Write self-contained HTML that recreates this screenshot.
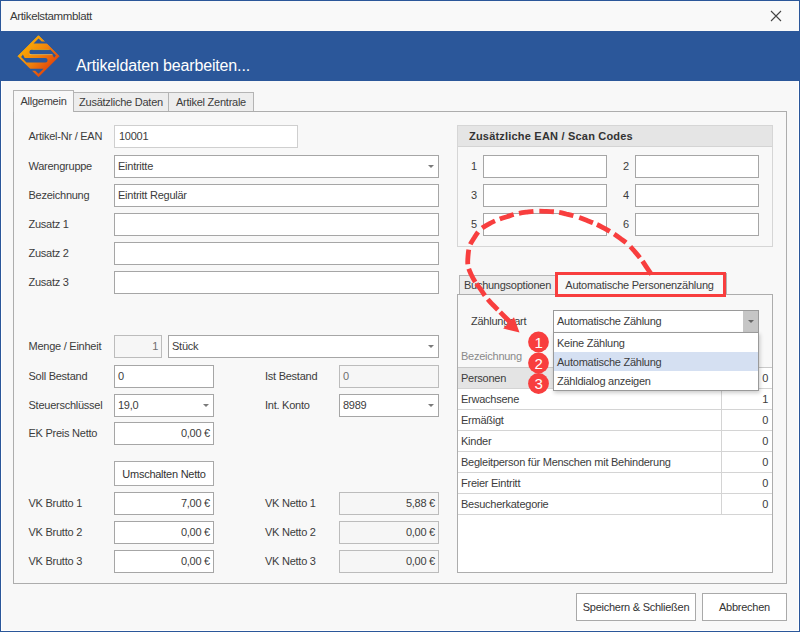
<!DOCTYPE html>
<html lang="de">
<head>
<meta charset="utf-8">
<title>Artikelstammblatt</title>
<style>
*{box-sizing:border-box;margin:0;padding:0}
html,body{width:800px;height:632px;overflow:hidden;background:#f8f8f8}
body{font-family:"Liberation Sans",sans-serif;font-size:11px;color:#3c3c3c;position:relative;letter-spacing:-0.25px}
.abs{position:absolute}
#win{position:absolute;left:0;top:0;width:800px;height:632px;border:1px solid #2b579a;background:#f8f8f8;overflow:hidden}
#inner{position:absolute;left:0;top:0;width:798px;height:630px;border:1px solid #fff}
#titlebar{position:absolute;left:0;top:0;width:798px;height:30px;background:#f9f9f9}
#titlebar span{position:absolute;left:9px;top:3px;font-size:11.5px;line-height:24px;color:#3a3a3a;letter-spacing:-0.37px}
#header{position:absolute;left:0;top:30px;width:798px;height:50px;background:#2b579a}
#header .t{position:absolute;left:75px;top:23px;font-size:16px;line-height:24px;color:#fff;white-space:nowrap;letter-spacing:-0.15px}
.lbl{position:absolute;white-space:nowrap;line-height:22px;height:22px;font-size:11px;color:#3c3c3c}
.fld{position:absolute;height:23px;background:#fff;border:1px solid #a6a6a6;line-height:20px;padding:0 3px;white-space:nowrap;font-size:11px;color:#3c3c3c}
.fld.r{text-align:right;padding-right:3px}
.fld.dis{background:#f6f6f6;border-color:#bcbcbc;color:#6e6e6e}
.fld.lt{border-color:#cfcfcf}
.dd:after{content:"";position:absolute;right:4px;top:9px;border-left:3px solid transparent;border-right:3px solid transparent;border-top:3px solid #7a7a7a}
.tab{position:absolute;border:1px solid #b4b4b4;border-bottom:none;background:#ededed;font-size:11px;text-align:center;white-space:nowrap;color:#3c3c3c}
.tab.sel{background:#f8f8f8;z-index:3}
.panel{position:absolute;border:1px solid #adadad;background:#f8f8f8}
.btn{position:absolute;background:#fff;border:1px solid #a9a9a9;text-align:center;font-size:11px;white-space:nowrap;color:#333}
</style>
</head>
<body>
<div id="win">
<div id="inner"></div>
<div id="titlebar"><span>Artikelstammblatt</span>
<svg class="abs" style="left:769px;top:9px" width="12" height="12" viewBox="0 0 12 12"><path d="M1 1 L11 11 M11 1 L1 11" stroke="#444" stroke-width="1.1" fill="none"/></svg>
</div>
<div id="header">
<svg class="abs" style="left:14px;top:2px" width="46" height="46" viewBox="-23 -23 46 46">
<defs>
<linearGradient id="lg" x1="0.1" y1="0.1" x2="0.9" y2="0.9">
<stop offset="0" stop-color="#fdb900"/>
<stop offset="0.5" stop-color="#f0820c"/>
<stop offset="1" stop-color="#dc300c"/>
</linearGradient>
</defs>
<g transform="translate(0.5,0.2)">
<path d="M0 -20.5 L20.5 0 L0 20.5 L-20.5 0 Z" fill="url(#lg)" stroke="url(#lg)" stroke-width="1" stroke-linejoin="round"/>
<g fill="#2b579a">
<path id="n1" d="M0 -17.6 L-5 -12.6 L12 -12.6 L12 -14.6 L3.2 -14.6 Z"/>
<path id="h1" d="M-6.8 -6.4 L12 -6.4 L17.4 -0.8 L15.6 1.6 L13.8 -1.8 L-6.8 -1.8 A2.3 2.3 0 0 1 -6.8 -6.4 Z"/>
<use href="#n1" transform="rotate(180)"/>
<use href="#h1" transform="rotate(180)"/>
</g>
<path d="M-9 -1.6 L14 -1.6" stroke="#ffd35a" stroke-width="0.8" opacity="0.7"/>
<path d="M-6 -6.6 L11 -6.6" stroke="#ffd000" stroke-width="0.6" opacity="0.6"/>
</g>
</svg>
<div class="t">Artikeldaten bearbeiten...</div>
</div>

<!-- main tabs -->
<div class="tab sel" style="left:12px;top:89px;width:61px;height:22px;line-height:21px">Allgemein</div>
<div class="tab" style="left:72px;top:91px;width:96px;height:19px;line-height:18px">Zusätzliche Daten</div>
<div class="tab" style="left:167px;top:91px;width:86px;height:19px;line-height:18px">Artikel Zentrale</div>
<div class="panel" style="left:12px;top:110px;width:774px;height:473px"></div>

<!-- left column -->
<div class="lbl" style="left:27.5px;top:124px">Artikel-Nr / EAN</div>
<div class="fld lt" style="left:113px;top:124px;width:184px;padding-left:4px">10001</div>
<div class="lbl" style="left:27.5px;top:154px">Warengruppe</div>
<div class="fld dd" style="left:113px;top:154px;width:325px">Eintritte</div>
<div class="lbl" style="left:27.5px;top:183px">Bezeichnung</div>
<div class="fld" style="left:113px;top:183px;width:325px">Eintritt Regulär</div>
<div class="lbl" style="left:27.5px;top:212px">Zusatz 1</div>
<div class="fld" style="left:113px;top:212px;width:325px"></div>
<div class="lbl" style="left:27.5px;top:241px">Zusatz 2</div>
<div class="fld" style="left:113px;top:241px;width:325px"></div>
<div class="lbl" style="left:27.5px;top:270px">Zusatz 3</div>
<div class="fld" style="left:113px;top:270px;width:325px"></div>

<div class="lbl" style="left:27.5px;top:334px">Menge / Einheit</div>
<div class="fld r dis" style="left:113px;top:334px;width:48px">1</div>
<div class="fld dd" style="left:167px;top:334px;width:271px">Stück</div>
<div class="lbl" style="left:27.5px;top:364px">Soll Bestand</div>
<div class="fld" style="left:113px;top:364px;width:100px">0</div>
<div class="lbl" style="left:264px;top:364px">Ist Bestand</div>
<div class="fld dis" style="left:338px;top:364px;width:100px">0</div>
<div class="lbl" style="left:27.5px;top:393px">Steuerschlüssel</div>
<div class="fld dd" style="left:113px;top:393px;width:100px">19,0</div>
<div class="lbl" style="left:264px;top:393px">Int. Konto</div>
<div class="fld dd" style="left:338px;top:393px;width:100px">8989</div>
<div class="lbl" style="left:27.5px;top:421px">EK Preis Netto</div>
<div class="fld r" style="left:113px;top:421px;width:100px">0,00 €</div>

<div class="btn" style="left:113px;top:460px;width:100px;height:25px;line-height:24px">Umschalten Netto</div>

<div class="lbl" style="left:27.5px;top:491px">VK Brutto 1</div>
<div class="fld r" style="left:113px;top:491px;width:100px">7,00 €</div>
<div class="lbl" style="left:264px;top:491px">VK Netto 1</div>
<div class="fld r dis" style="left:338px;top:491px;width:100px;color:#3c3c3c">5,88 €</div>
<div class="lbl" style="left:27.5px;top:520px">VK Brutto 2</div>
<div class="fld r" style="left:113px;top:520px;width:100px">0,00 €</div>
<div class="lbl" style="left:264px;top:520px">VK Netto 2</div>
<div class="fld r dis" style="left:338px;top:520px;width:100px;color:#3c3c3c">0,00 €</div>
<div class="lbl" style="left:27.5px;top:549px">VK Brutto 3</div>
<div class="fld r" style="left:113px;top:549px;width:100px">0,00 €</div>
<div class="lbl" style="left:264px;top:549px">VK Netto 3</div>
<div class="fld r dis" style="left:338px;top:549px;width:100px;color:#3c3c3c">0,00 €</div>

<!-- EAN group -->
<div class="abs" style="left:456px;top:124px;width:316px;height:122px;border:1px solid #d6d6d6;background:#f8f8f8"></div>
<div class="abs" style="left:457px;top:125px;width:314px;height:21px;background:#e5e5e5;border-bottom:1px solid #d4d4d4;font-weight:bold;font-size:11px;line-height:21px;padding-left:11px;color:#333;letter-spacing:0.2px">Zusätzliche EAN / Scan Codes</div>
<div class="lbl" style="left:470px;top:154px">1</div><div class="fld" style="left:482px;top:154px;width:124px"></div>
<div class="lbl" style="left:622px;top:154px">2</div><div class="fld" style="left:634px;top:154px;width:124px"></div>
<div class="lbl" style="left:470px;top:183px">3</div><div class="fld" style="left:482px;top:183px;width:124px"></div>
<div class="lbl" style="left:622px;top:183px">4</div><div class="fld" style="left:634px;top:183px;width:124px"></div>
<div class="lbl" style="left:470px;top:212px">5</div><div class="fld" style="left:482px;top:212px;width:124px"></div>
<div class="lbl" style="left:622px;top:212px">6</div><div class="fld" style="left:634px;top:212px;width:124px"></div>

<!-- sub tabs -->
<div class="tab" style="left:458px;top:274px;width:97px;height:19px;line-height:19px">Buchungsoptionen</div>
<div class="tab sel" style="left:554px;top:272px;width:172px;height:22px;line-height:22px;padding-right:3px">Automatische Personenzählung</div>
<div class="panel" style="left:456px;top:293px;width:316px;height:279px"></div>

<div class="lbl" style="left:470px;top:309px">Zählungsart</div>
<div class="fld" style="left:552px;top:309px;width:206px;border-color:#9a9a9a">Automatische Zählung</div>
<div class="abs" style="left:742px;top:310px;width:15px;height:21px;background:#c6c6c6"></div>
<div class="abs" style="left:747px;top:319px;border-left:3px solid transparent;border-right:3px solid transparent;border-top:3px solid #666"></div>

<!-- grid -->
<div class="abs" style="left:457px;top:344px;width:314px;height:227px;background:#fff"></div>
<div class="abs" style="left:457px;top:344px;width:314px;height:23px;background:#f8f8f8;border-bottom:1px solid #c9c9c9"></div>
<div class="lbl" style="left:460px;top:344px;color:#8a8a8a">Bezeichnung</div>
<div class="abs" style="left:457px;top:367px;width:314px;height:21px;border-bottom:1px solid #d4d4d4;background:linear-gradient(90deg,#e4e4e4 263px,#fff 263px)"></div>
<div class="abs" style="left:457px;top:388px;width:314px;height:21px;border-bottom:1px solid #d4d4d4"></div>
<div class="abs" style="left:457px;top:409px;width:314px;height:21px;border-bottom:1px solid #d4d4d4"></div>
<div class="abs" style="left:457px;top:430px;width:314px;height:21px;border-bottom:1px solid #d4d4d4"></div>
<div class="abs" style="left:457px;top:451px;width:314px;height:21px;border-bottom:1px solid #d4d4d4"></div>
<div class="abs" style="left:457px;top:472px;width:314px;height:21px;border-bottom:1px solid #d4d4d4"></div>
<div class="abs" style="left:457px;top:493px;width:314px;height:21px;border-bottom:1px solid #d4d4d4"></div>
<div class="abs" style="left:720px;top:367px;width:1px;height:147px;background:#d4d4d4"></div>
<div class="lbl" style="left:460px;top:367px;line-height:21px">Personen</div><div class="lbl" style="left:729px;top:367px;width:38px;text-align:right;line-height:21px">0</div>
<div class="lbl" style="left:460px;top:388px;line-height:21px">Erwachsene</div><div class="lbl" style="left:729px;top:388px;width:38px;text-align:right;line-height:21px">1</div>
<div class="lbl" style="left:460px;top:409px;line-height:21px">Ermäßigt</div><div class="lbl" style="left:729px;top:409px;width:38px;text-align:right;line-height:21px">0</div>
<div class="lbl" style="left:460px;top:430px;line-height:21px">Kinder</div><div class="lbl" style="left:729px;top:430px;width:38px;text-align:right;line-height:21px">0</div>
<div class="lbl" style="left:460px;top:451px;line-height:21px">Begleitperson für Menschen mit Behinderung</div><div class="lbl" style="left:729px;top:451px;width:38px;text-align:right;line-height:21px">0</div>
<div class="lbl" style="left:460px;top:472px;line-height:21px">Freier Eintritt</div><div class="lbl" style="left:729px;top:472px;width:38px;text-align:right;line-height:21px">0</div>
<div class="lbl" style="left:460px;top:493px;line-height:21px">Besucherkategorie</div><div class="lbl" style="left:729px;top:493px;width:38px;text-align:right;line-height:21px">0</div>

<!-- dropdown list -->
<div class="abs" style="left:552px;top:331px;width:206px;height:59px;background:#fff;border:1px solid #9a9a9a;box-shadow:1px 2px 4px rgba(0,0,0,0.2)"></div>
<div class="abs" style="left:553px;top:351px;width:204px;height:19px;background:#d5e0f2"></div>
<div class="lbl" style="left:556px;top:333px;line-height:19px">Keine Zählung</div>
<div class="lbl" style="left:556px;top:352px;line-height:19px">Automatische Zählung</div>
<div class="lbl" style="left:556px;top:371px;line-height:19px">Zähldialog anzeigen</div>

<!-- bottom buttons -->
<div class="btn" style="left:575px;top:592px;width:120px;height:28px;line-height:26px">Speichern &amp; Schließen</div>
<div class="btn" style="left:701px;top:592px;width:85px;height:28px;line-height:26px">Abbrechen</div>

<!-- annotations -->
<svg class="abs" style="left:-1px;top:-1px;z-index:10" width="800" height="632" viewBox="0 0 800 632">
<path d="M651.5 274.5 C650.8 273.4 648.7 270.4 647.0 267.9 C645.3 265.4 643.2 262.0 641.2 259.4 C639.2 256.7 637.2 254.4 635.0 251.9 C632.8 249.4 630.6 246.6 628.1 244.4 C625.7 242.1 623.0 240.4 620.3 238.4 C617.7 236.5 614.9 234.5 612.2 232.8 C609.5 231.1 606.8 229.6 604.0 228.1 C601.2 226.6 598.5 225.1 595.5 223.8 C592.5 222.4 589.1 221.2 585.9 220.0 C582.7 218.8 579.5 217.6 576.2 216.6 C572.9 215.6 569.4 214.8 566.1 214.0 C562.8 213.2 559.6 212.4 556.3 212.0 C553.0 211.6 549.8 211.5 546.5 211.4 C543.2 211.3 539.6 211.1 536.2 211.2 C532.9 211.3 529.6 211.8 526.2 212.2 C522.9 212.6 519.6 213.1 516.4 213.8 C513.1 214.5 510.0 215.7 506.9 216.7 C503.7 217.6 500.5 218.5 497.5 219.8 C494.5 221.0 491.5 222.4 488.6 224.1 C485.7 225.7 482.5 227.5 480.1 229.7 C477.8 231.9 476.1 234.7 474.4 237.5 C472.6 240.3 470.6 243.1 469.6 246.2 C468.5 249.4 468.3 253.0 468.0 256.2 C467.7 259.5 467.5 262.9 468.0 265.9 C468.5 268.9 469.9 271.7 471.1 274.4 C472.3 277.0 473.5 279.2 475.1 281.8 C476.7 284.3 478.8 286.8 480.7 289.4 C482.6 292.1 484.2 294.9 486.2 297.4 C488.2 299.9 490.4 302.2 492.5 304.5 C494.7 306.7 496.8 308.7 498.9 310.8 C500.9 312.9 503.1 315.1 505.0 317.0 C506.9 318.9 509.2 321.2 510.0 322.0" fill="none" stroke="#f83e3e" stroke-width="4.8" stroke-dasharray="16.0 4.4 14.6 5.9 14.6 5.2 14.6 4.4 14.6 6.1 14.6 5.3 14.6 5.9 14.6 5.4 14.6 5.2 14.6 5.7 14.6 5.5 14.6 4.8 14.6 2.2 14.6 4.6 14.6 3.3 20 100"/>
<rect x="556.5" y="273.5" width="168" height="22" fill="none" stroke="#f83e3e" stroke-width="3"/>
<path d="M503.2 328.5 L514 317.2 L519.5 332.5 Z" fill="#f83e3e"/>
<g font-family="Liberation Sans, sans-serif" font-size="15" fill="#fff" text-anchor="middle">
<circle cx="538.5" cy="342" r="10.4" fill="#f83e3e"/><text x="538.5" y="347.5">1</text>
<circle cx="538.5" cy="363" r="10.4" fill="#f83e3e"/><text x="538.5" y="368.5">2</text>
<circle cx="538.5" cy="383.5" r="10.4" fill="#f83e3e"/><text x="538.5" y="389">3</text>
</g>
</svg>
</div>
</body>
</html>
